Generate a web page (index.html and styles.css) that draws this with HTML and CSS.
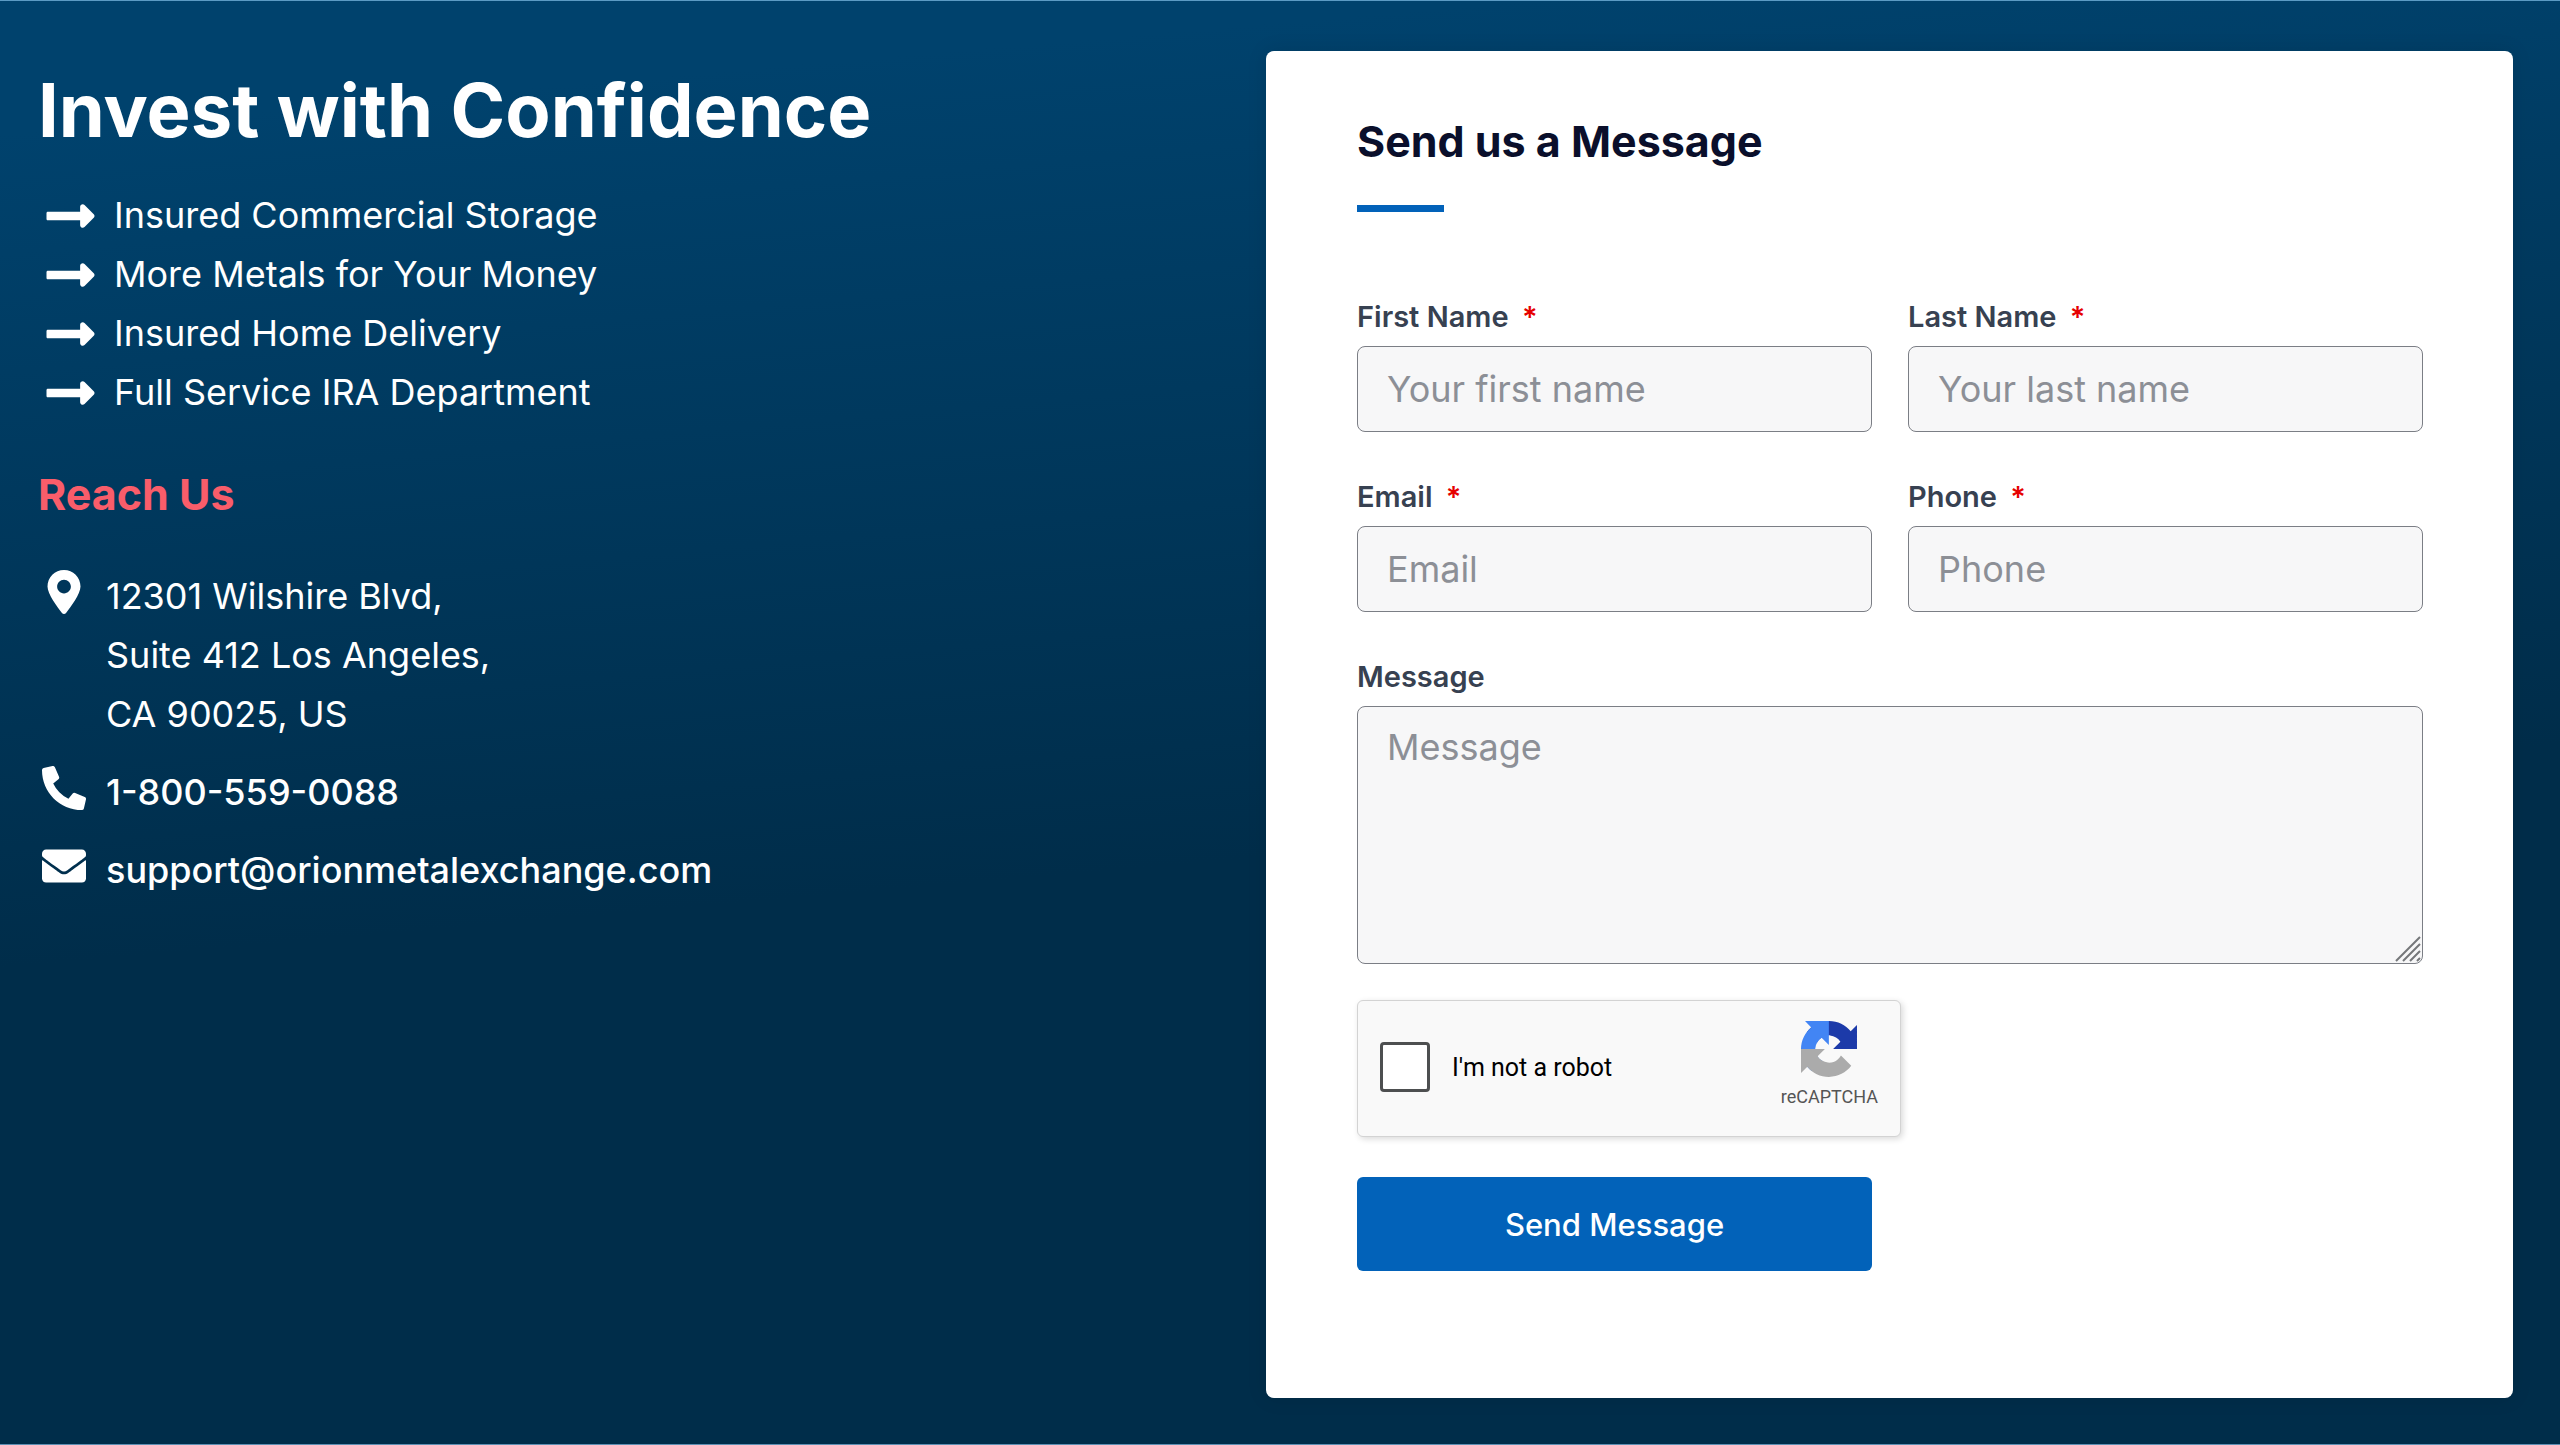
FILE: index.html
```html
<!DOCTYPE html>
<html lang="en">
  <head>
    <meta charset="UTF-8" />
    <meta name="viewport" content="width=device-width, initial-scale=1.0" />
    <title>Contact Us</title>
    <link rel="stylesheet" href="styles.css">
  </head>
  <body>
    <!-- Shared arrow icon -->
    <svg class="icon-defs" aria-hidden="true">
      <symbol id="arrow" viewBox="0 144 448 224">
        <path d="M313.941 216H12c-6.627 0-12 5.373-12 12v56c0 6.627 5.373 12 12 12h301.941v46.059c0 21.382 25.851 32.09 40.971 16.971l86.059-86.059c9.373-9.373 9.373-24.569 0-33.941l-86.059-86.059c-15.119-15.119-40.971-4.411-40.971 16.971V216z"/>
      </symbol>
    </svg>

    <main class="contact-section">
      <!-- Company Info -->
      <section class="info">
        <h1>Invest with Confidence</h1>
        <ul class="benefits">
          <li><svg class="arrow" aria-hidden="true"><use href="#arrow"/></svg>Insured Commercial Storage</li>
          <li><svg class="arrow" aria-hidden="true"><use href="#arrow"/></svg>More Metals for Your Money</li>
          <li><svg class="arrow" aria-hidden="true"><use href="#arrow"/></svg>Insured Home Delivery</li>
          <li><svg class="arrow" aria-hidden="true"><use href="#arrow"/></svg>Full Service IRA Department</li>
        </ul>

        <h2>Reach Us</h2>
        <ul class="reach">
          <li>
            <svg class="icon" viewBox="-64 0 512 512" aria-hidden="true"><path fill-rule="evenodd" d="M215.7 499.2C267 435 384 279.4 384 192C384 86 298 0 192 0S0 86 0 192c0 87.4 117 243 168.3 307.2c12.3 15.3 35.1 15.3 47.4 0zM192 272c44.183 0 80-35.817 80-80s-35.817-80-80-80-80 35.817-80 80 35.817 80 80 80z"/></svg>
            <address>12301 Wilshire Blvd,<br />Suite 412 Los Angeles,<br />CA 90025, US</address>
          </li>
          <li>
            <svg class="icon" viewBox="0 0 512 512" aria-hidden="true"><path d="M497.39 361.8l-112-48a24 24 0 0 0-28 6.9l-49.6 60.6A370.66 370.66 0 0 1 130.6 204.11l60.6-49.6a23.94 23.94 0 0 0 6.9-28l-48-112A24.16 24.16 0 0 0 122.6.61l-104 24A24 24 0 0 0 0 48c0 256.5 207.9 464 464 464a24 24 0 0 0 23.4-18.6l24-104a24.29 24.29 0 0 0-14.01-27.6z"/></svg>
            <a href="tel:18005590088">1-800-559-0088</a>
          </li>
          <li>
            <svg class="icon" viewBox="0 0 512 512" aria-hidden="true"><path d="M502.3 190.8c3.9-3.1 9.7-.2 9.7 4.7V400c0 26.5-21.5 48-48 48H48c-26.5 0-48-21.5-48-48V195.6c0-5 5.7-7.8 9.7-4.7 22.4 17.4 52.1 39.5 154.1 113.6 21.1 15.4 56.7 47.8 92.2 47.6 35.7.3 72-32.8 92.3-47.6 102-74.1 131.6-96.3 154-113.7zM256 320c23.2.4 56.6-29.2 73.4-41.4 132.7-96.3 142.8-104.7 173.4-128.7 5.8-4.5 9.2-11.5 9.2-18.9v-19c0-26.5-21.5-48-48-48H48c-26.5 0-48 21.5-48 48v19c0 7.4 3.4 14.3 9.2 18.9 30.6 23.9 40.7 32.4 173.4 128.7 16.8 12.2 50.2 41.8 73.4 41.4z"/></svg>
            <a href="mailto:support@orionmetalexchange.com">support@orionmetalexchange.com</a>
          </li>
        </ul>
      </section>

      <!-- Contact Form -->
      <section class="card">
        <h2>Send us a Message</h2>
        <form class="form" id="contactForm">
          <div class="field">
            <label for="firstName">First Name <span class="required">*</span></label>
            <input type="text" id="firstName" name="firstName" placeholder="Your first name" required />
          </div>
          <div class="field">
            <label for="lastName">Last Name <span class="required">*</span></label>
            <input type="text" id="lastName" name="lastName" placeholder="Your last name" required />
          </div>
          <div class="field">
            <label for="email">Email <span class="required">*</span></label>
            <input type="email" id="email" name="email" placeholder="Email" required />
          </div>
          <div class="field">
            <label for="phone">Phone <span class="required">*</span></label>
            <input type="tel" id="phone" name="phone" placeholder="Phone" required />
          </div>
          <div class="field full">
            <label for="message">Message</label>
            <div class="textarea-wrap">
              <textarea id="message" name="message" placeholder="Message"></textarea>
              <svg class="grip" viewBox="0 0 26 26" aria-hidden="true"><path d="M1 25L25 1M8 25L25 8M15 25L25 15M22 25L25 22"/></svg>
            </div>
          </div>

          <div class="full captcha">
            <input type="checkbox" id="robot" name="robot" />
            <label for="robot">I'm not a robot</label>
            <div class="captcha-brand">
              <svg viewBox="0 0 64 64" aria-hidden="true">
                <path fill="#1c3aa9" d="M64 31.955l-.033-1.37V4.687l-7.16 7.16C50.948 4.674 42.033.093 32.05.093c-10.4 0-19.622 4.96-25.458 12.64l11.736 11.86a15.55 15.55 0 0 1 4.754-5.334c2.05-1.6 4.952-2.906 8.968-2.906.485 0 .86.057 1.135.163 4.976.393 9.288 3.14 11.828 7.124l-8.307 8.307L64 31.953"/>
                <path fill="#4285f4" d="M31.862.094l-1.37.033H4.594l7.16 7.16C4.58 13.147 0 22.06 0 32.046c0 10.4 4.96 19.622 12.64 25.458L24.5 45.768a15.55 15.55 0 0 1-5.334-4.754c-1.6-2.05-2.906-4.952-2.906-8.968 0-.485.057-.86.163-1.135.393-4.976 3.14-9.288 7.124-11.828l8.307 8.307L31.86.095"/>
                <path fill="#ababab" d="M.001 32.045l.033 1.37v25.898l7.16-7.16c5.86 7.173 14.774 11.754 24.76 11.754 10.4 0 19.622-4.96 25.458-12.64l-11.736-11.86a15.55 15.55 0 0 1-4.754 5.334c-2.05 1.6-4.952 2.906-8.968 2.906-.485 0-.86-.057-1.135-.163-4.976-.393-9.288-3.14-11.828-7.124l8.307-8.307c-10.522.04-22.4.066-27.295-.005"/>
              </svg>
              <span>reCAPTCHA</span>
            </div>
          </div>

          <button type="submit">Send Message</button>
        </form>
      </section>
    </main>
  </body>
</html>
```
FILE: styles.css
```css
/* General Styling */
* {
  box-sizing: border-box;
  margin: 0;
  padding: 0;
}

body {
  font-family: Inter, "Liberation Sans", sans-serif;
  font-size: 36px;
  line-height: 59px;
  color: #fff;
}

ul {
  list-style: none;
}

.icon-defs {
  display: none;
}

/* Two Column Section */
.contact-section {
  display: grid;
  grid-template-columns: 1fr 1fr;
  min-height: 100vh;
  padding: 50px 47px 46px 19px;
  border-top: 1px solid #5c9bc4;
  border-bottom: 1px solid #5d8fb3;
  background: linear-gradient(175deg, #00426d 8%, #002d4a 58%);
}

/* Company Info */
.info {
  padding: 14px 19px;
}

h1 {
  font-size: 74px;
  font-weight: 700;
  line-height: 90px;
  margin-bottom: 31px;
}

.benefits li {
  display: flex;
  align-items: center;
  gap: 19px;
  padding-left: 8px;
}

.arrow {
  width: 49px;
  height: 24px;
  fill: #fff;
}

.info h2 {
  font-size: 43px;
  font-weight: 700;
  color: #f95d6a;
  margin: 43px 0;
}

.reach {
  display: grid;
  gap: 19px;
}

.reach li {
  display: flex;
  gap: 20px;
  padding-left: 4px;
}

.icon {
  width: 44px;
  height: 44px;
  margin-top: 3px;
  fill: #fff;
}

address {
  font-style: normal;
}

.reach a {
  color: #fff;
  font-weight: 500;
  text-decoration: none;
}

/* Form Card */
.card {
  padding: 61px 90px 61px 91px;
  background: #fff;
  border-radius: 8px;
  box-shadow: 0 0 20px rgba(0, 0, 0, 0.1);
}

.card h2 {
  font-size: 43px;
  font-weight: 700;
  color: #0a0f2b;
}

.card h2::after {
  content: "";
  display: block;
  width: 87px;
  height: 7px;
  margin-top: 34px;
  background: #0262b9;
}

.form {
  display: grid;
  grid-template-columns: 1fr 1fr;
  column-gap: 36px;
  row-gap: 36px;
  margin-top: 76px;
}

.full {
  grid-column: 1 / -1;
}

.field {
  display: grid;
}

.field label {
  font-size: 29px;
  font-weight: 600;
  line-height: 58px;
  color: #374151;
}

.required {
  margin-left: 6px;
  color: #e60000;
}

.field input,
textarea {
  display: block;
  width: 100%;
  height: 86px;
  padding: 0 29px;
  border: 1px solid #7b7e85;
  border-radius: 8px;
  background: #f7f7f8;
  font: inherit;
  color: #374151;
}

textarea {
  height: 258px;
  padding: 11px 29px;
  resize: none;
}

::placeholder {
  color: #8c8f96;
  opacity: 1;
}

.textarea-wrap {
  position: relative;
}

.grip {
  position: absolute;
  right: 2px;
  bottom: 2px;
  width: 26px;
  height: 26px;
  fill: none;
  stroke: #75777a;
  stroke-width: 2;
  pointer-events: none;
}

/* Captcha */
.captcha {
  display: flex;
  align-items: center;
  width: 544px;
  height: 137px;
  padding: 0 22px 3px;
  border: 1px solid #d3d3d3;
  border-radius: 6px;
  background: #f9f9f9;
  box-shadow: 2px 2px 6px rgba(0, 0, 0, 0.15);
  font-family: Roboto, sans-serif;
  color: #000;
}

.captcha input {
  appearance: none;
  width: 50px;
  height: 50px;
  border: 3px solid #4d4f50;
  border-radius: 4px;
  background: #fff;
}

.captcha label {
  margin-left: 22px;
  font-size: 25px;
}

.captcha-brand {
  display: grid;
  justify-items: center;
  gap: 8px;
  margin-left: auto;
  padding-bottom: 4px;
  font-size: 18px;
  line-height: 24px;
  color: #555;
}

.captcha-brand svg {
  width: 56px;
  height: 56px;
}

/* Submit */
button {
  height: 94px;
  margin-top: 4px;
  border: none;
  border-radius: 6px;
  background: #0262b9;
  font-family: inherit;
  font-size: 31px;
  font-weight: 500;
  color: #fff;
  cursor: pointer;
}

button:hover {
  background: #00529c;
}
```
